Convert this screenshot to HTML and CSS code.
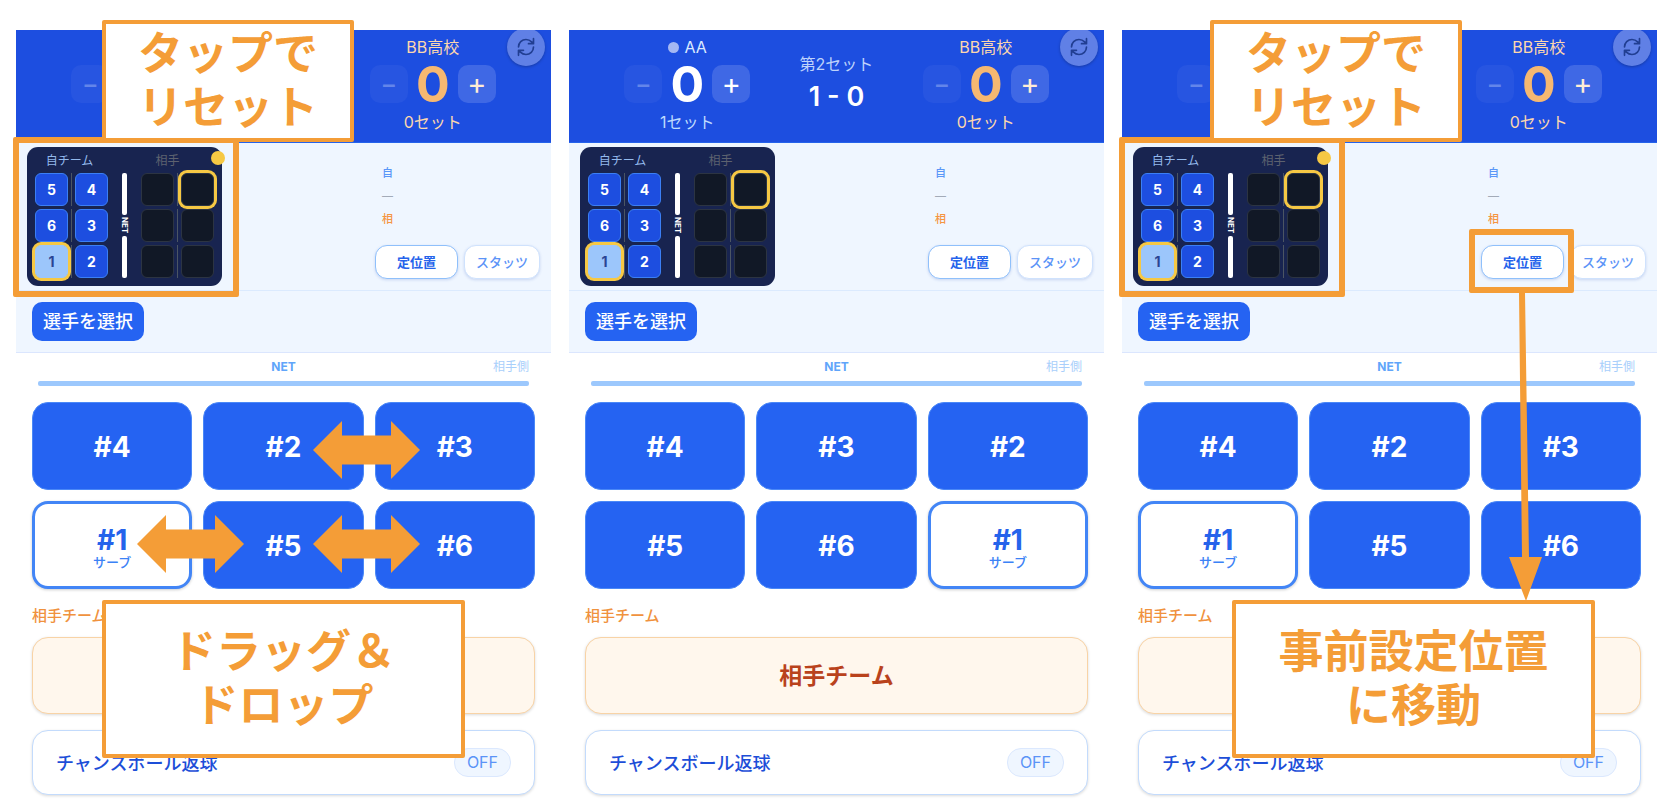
FILE: index.html
```html
<!DOCTYPE html>
<html lang="ja">
<head>
<meta charset="utf-8">
<title>ローテーション操作ガイド</title>
<link rel="stylesheet" href="styles.css">
</head>
<body>
<svg class="defs" aria-hidden="true">
  <symbol id="refresh" viewBox="0 0 24 24"><path d="M3 12a9 9 0 0 1 9-9 9.750 9.750 0 0 1 6.740 2.740L21 8M21 2v6h-6M21 12a9 9 0 0 1-9 9 9.750 9.750 0 0 1-6.740-2.740L3 16M9 16H3v6"/></symbol>
  <symbol id="swap" viewBox="0 0 107 58"><path d="M0 29 29 0V14.500H78V0L107 29 78 58V43.500H29V58Z"/></symbol>
</svg>
<main class="guide">

  <section class="phone">
    <header class="score">
      <div class="team">
        <div class="name"></div>
        <div class="counter"><button class="step" disabled>−</button></div>
      </div>
      <div class="match"></div>
      <div class="team away">
        <div class="name">BB高校</div>
        <div class="counter"><button class="step" disabled>−</button><strong>0</strong><button class="step">+</button></div>
        <div class="sets">0セット</div>
      </div>
      <button class="refresh" aria-label="更新"><svg><use href="#refresh"/></svg></button>
    </header>
    <div class="info">
      <div class="court">
        <div class="side">
          <span class="cap">自チーム</span>
          <div class="spots"><b>5</b><i></i><b>4</b><b>6</b><i></i><b>3</b><b class="serve">1</b><i></i><b>2</b></div>
        </div>
        <div class="mini-net"><span>NET</span></div>
        <div class="side opp">
          <span class="cap">相手</span>
          <div class="spots"><b></b><i></i><b class="ring"></b><b></b><i></i><b></b><b></b><i></i><b></b></div>
        </div>
      </div>
      <div class="tools">
        <div class="log"><span class="own">自</span><span class="dash">—</span><span class="rival">相</span></div>
        <div class="actions"><button class="home">定位置</button><button class="stats">スタッツ</button></div>
      </div>
    </div>
    <div class="pick"><button>選手を選択</button></div>
    <div class="net"><b>NET</b><span class="far">相手側</span></div>
    <div class="players">
      <button>#4</button><button>#2</button><button>#3</button>
      <button class="server">#1<small>サーブ</small></button><button>#5</button><button>#6</button>
    </div>
    <div class="rival-box">
      <h2>相手チーム</h2>
      <button aria-label="相手チーム"></button>
    </div>
    <button class="chance"><span>チャンスボール返球</span><em>OFF</em></button>

    <div class="frame frame-court"></div>
    <div class="note note-tap">タップで<br>リセット</div>
    <i class="pin"></i>
    <svg class="swap swap-a"><use href="#swap"/></svg>
    <svg class="swap swap-b"><use href="#swap"/></svg>
    <svg class="swap swap-c"><use href="#swap"/></svg>
    <div class="note note-drag">ドラッグ＆<br>ドロップ</div>
  </section>

  <section class="phone">
    <header class="score">
      <div class="team">
        <div class="name"><i class="dot"></i>AA</div>
        <div class="counter"><button class="step" disabled>−</button><strong>0</strong><button class="step">+</button></div>
        <div class="sets">1セット</div>
      </div>
      <div class="match"><span>第2セット</span><strong>1 - 0</strong></div>
      <div class="team away">
        <div class="name">BB高校</div>
        <div class="counter"><button class="step" disabled>−</button><strong>0</strong><button class="step">+</button></div>
        <div class="sets">0セット</div>
      </div>
      <button class="refresh" aria-label="更新"><svg><use href="#refresh"/></svg></button>
    </header>
    <div class="info">
      <div class="court">
        <div class="side">
          <span class="cap">自チーム</span>
          <div class="spots"><b>5</b><i></i><b>4</b><b>6</b><i></i><b>3</b><b class="serve">1</b><i></i><b>2</b></div>
        </div>
        <div class="mini-net"><span>NET</span></div>
        <div class="side opp">
          <span class="cap">相手</span>
          <div class="spots"><b></b><i></i><b class="ring"></b><b></b><i></i><b></b><b></b><i></i><b></b></div>
        </div>
      </div>
      <div class="tools">
        <div class="log"><span class="own">自</span><span class="dash">—</span><span class="rival">相</span></div>
        <div class="actions"><button class="home">定位置</button><button class="stats">スタッツ</button></div>
      </div>
    </div>
    <div class="pick"><button>選手を選択</button></div>
    <div class="net"><b>NET</b><span class="far">相手側</span></div>
    <div class="players">
      <button>#4</button><button>#3</button><button>#2</button>
      <button>#5</button><button>#6</button><button class="server">#1<small>サーブ</small></button>
    </div>
    <div class="rival-box">
      <h2>相手チーム</h2>
      <button>相手チーム</button>
    </div>
    <button class="chance"><span>チャンスボール返球</span><em>OFF</em></button>
  </section>

  <section class="phone">
    <header class="score">
      <div class="team">
        <div class="name"></div>
        <div class="counter"><button class="step" disabled>−</button></div>
      </div>
      <div class="match"></div>
      <div class="team away">
        <div class="name">BB高校</div>
        <div class="counter"><button class="step" disabled>−</button><strong>0</strong><button class="step">+</button></div>
        <div class="sets">0セット</div>
      </div>
      <button class="refresh" aria-label="更新"><svg><use href="#refresh"/></svg></button>
    </header>
    <div class="info">
      <div class="court">
        <div class="side">
          <span class="cap">自チーム</span>
          <div class="spots"><b>5</b><i></i><b>4</b><b>6</b><i></i><b>3</b><b class="serve">1</b><i></i><b>2</b></div>
        </div>
        <div class="mini-net"><span>NET</span></div>
        <div class="side opp">
          <span class="cap">相手</span>
          <div class="spots"><b></b><i></i><b class="ring"></b><b></b><i></i><b></b><b></b><i></i><b></b></div>
        </div>
      </div>
      <div class="tools">
        <div class="log"><span class="own">自</span><span class="dash">—</span><span class="rival">相</span></div>
        <div class="actions"><button class="home">定位置</button><button class="stats">スタッツ</button></div>
      </div>
    </div>
    <div class="pick"><button>選手を選択</button></div>
    <div class="net"><b>NET</b><span class="far">相手側</span></div>
    <div class="players">
      <button>#4</button><button>#2</button><button>#3</button>
      <button class="server">#1<small>サーブ</small></button><button>#5</button><button>#6</button>
    </div>
    <div class="rival-box">
      <h2>相手チーム</h2>
      <button aria-label="相手チーム"></button>
    </div>
    <button class="chance"><span>チャンスボール返球</span><em>OFF</em></button>

    <div class="frame frame-court"></div>
    <div class="note note-tap shifted">タップで<br>リセット</div>
    <i class="pin"></i>
    <div class="frame frame-home"></div>
    <svg class="pointer" viewBox="0 0 34 308"><path d="M10 0H16L20 264H33L17 308 0 264H13Z"/></svg>
    <div class="note note-move">事前設定位置<br>に移動</div>
  </section>

</main>
</body>
</html>
```

FILE: styles.css
```css
* { box-sizing: border-box; }
body {
  margin: 0;
  background: #fff;
  font-family: Inter, "Noto Sans CJK JP", sans-serif;
}
button { margin: 0; padding: 0; border: 0; font: inherit; color: inherit; cursor: pointer; }
i, em { font-style: normal; }
.defs { display: none; }

.guide {
  display: grid;
  grid-template-columns: repeat(3, minmax(0, 1fr));
  gap: 18px;
  padding: 30px 19px 16px 16px;
}
.phone { position: relative; display: flex; flex-direction: column; }

/* score header */
.score {
  position: relative;
  display: grid;
  grid-template-columns: 1fr 94px 1fr;
  height: 113px;
  padding: 5px 16px 0;
  border-bottom: 1px solid #2563eb;
  background: #1d4ee0;
  overflow: hidden;
  color: #fff;
}
.team { display: flex; flex-direction: column; align-items: center; }
.name { display: flex; align-items: center; gap: 6px; min-height: 24px; font-size: 16px; line-height: 24px; color: #dbeafe; }
.dot { width: 11px; height: 11px; border-radius: 50%; background: #a5b8f3; }
.counter { display: grid; grid-template-columns: 38px 50px 38px; align-items: center; margin-top: 6px; }
.counter strong { font-size: 50px; line-height: 38px; font-weight: 700; text-align: center; }
.step { height: 38px; border-radius: 10px; background: #3f68e5; font-size: 29px; line-height: 36px; font-weight: 400; color: #fff; }
.step:disabled { background: #2755e1; font-size: 25px; font-weight: 500; line-height: 38px; color: #6385ea; }
.sets { margin-top: 7px; font-size: 16px; line-height: 24px; color: #bfdbfe; }
.away .name, .away .sets { color: #fcd7ae; }
.away strong { color: #f6b871; }
.away .step:enabled { color: #ffedd5; }
.match { display: flex; flex-direction: column; align-items: center; padding-top: 17px; white-space: nowrap; }
.match span { font-size: 16px; line-height: 24px; color: #bfd3fb; }
.match strong { margin-top: 5px; font-size: 27px; line-height: 32px; font-weight: 600; }
.refresh {
  position: absolute;
  top: -2px;
  right: 6px;
  display: grid;
  place-items: center;
  width: 38px;
  height: 38px;
  border-radius: 50%;
  background: #6080e6;
  box-shadow: 0 1px 3px rgba(0, 0, 0, .25);
}
.refresh svg { width: 20px; height: 20px; overflow: visible; fill: none; stroke: #213e92; stroke-width: 2; stroke-linecap: round; stroke-linejoin: round; }

/* court and tools */
.info {
  display: flex;
  justify-content: space-between;
  height: 148px;
  padding: 4px 11px 0;
  border-bottom: 1px solid #dbeafe;
  background: #eff6ff;
}
.court { display: flex; justify-content: space-between; width: 195px; height: 139px; padding: 6px 8px 8px; border-radius: 11px; background: #182450; }
.side { display: flex; flex-direction: column; }
.cap { padding-right: 4px; font-size: 12px; line-height: 16px; margin-bottom: 4px; text-align: center; color: #93b9ec; }
.opp .cap { padding-right: 20px; color: #5d626f; }
.spots { display: grid; grid-template-columns: 33px 1px 33px; grid-auto-rows: 33px; gap: 3px; }
.spots i { background: #4b5563; }
.spots b {
  display: grid;
  place-items: center;
  border: 1px solid #3b7ff5;
  border-radius: 6px;
  background: #1d4ee0;
  font-size: 14px;
  font-weight: 700;
  color: #fff;
}
.spots .serve { border-color: #9cc6fb; background: #9cc6fb; color: #2a4494; box-shadow: 0 0 0 3px #f6c844; z-index: 1; }
.opp .spots b { border-color: #2c3442; background: #111826; }
.opp .spots .ring { box-shadow: 0 0 0 3px #f6c844; z-index: 1; }
.mini-net { display: flex; flex-direction: column; align-items: center; width: 6px; margin-top: 20px; }
.mini-net::before, .mini-net::after { content: ""; flex: 1; width: 5px; border-radius: 2px; background: #fff; }
.mini-net span { writing-mode: vertical-rl; padding: 2px 0; font-size: 8px; line-height: 8px; font-weight: 700; color: #fff; }

.tools { display: flex; flex-direction: column; justify-content: space-between; padding: 15px 0 11px; }
.log { display: flex; flex-direction: column; padding-left: 7px; font-size: 11px; line-height: 23px; font-weight: 500; }
.own { color: #5a97f8; }
.dash { color: #a3abb8; }
.rival { color: #f59542; }
.actions { display: flex; gap: 6px; }
.actions button {
  height: 34px;
  padding: 0 11px 2px;
  border: 1px solid #cfe2fd;
  border-radius: 12px;
  background: #fff;
  box-shadow: 0 1px 3px rgba(30, 64, 175, .18);
  font-size: 13px;
  font-weight: 500;
  color: #5b93f7;
}
.actions .home { padding: 0 21px 2px; border: 1px solid #8fc0fb; font-weight: 700; color: #2563eb; }

.pick { padding: 11px 16px; border-bottom: 1px solid #dbe6fe; background: #eff6ff; }
.pick button { display: block; height: 39px; padding: 0 11px; border-radius: 10px; background: #2563f2; font-size: 18px; line-height: 36px; font-weight: 500; color: #fff; }

/* rotation grid */
.net {
  display: grid;
  grid-template-columns: 1fr auto 1fr;
  row-gap: 4px;
  margin: 4px 22px 16px;
  font-size: 12px;
  line-height: 20px;
  color: #60a5fa;
}
.net::after { content: ""; grid-column: 1 / -1; height: 5px; border-radius: 2px; background: #9cc8fd; }
.net b { grid-column: 2; font-weight: 700; }
.far { text-align: right; color: #a9cffb; }
.players { display: grid; grid-template-columns: repeat(3, 1fr); grid-auto-rows: 88px; gap: 11px; padding: 0 16px; }
.players button {
  display: flex;
  flex-direction: column;
  align-items: center;
  justify-content: center;
  padding-top: 2px;
  border: 1px solid #4a88f7;
  border-radius: 16px;
  background: #2563f2;
  font-size: 28px;
  line-height: 32px;
  font-weight: 700;
  color: #fff;
}
.players .server { padding-top: 5px; border: 3px solid #4285f6; background: #fff; box-shadow: 0 1px 3px rgba(0, 0, 0, .2); color: #2563eb; line-height: 28px; }
.players small { font-size: 13px; line-height: 16px; font-weight: 500; color: #3b82f6; }

.rival-box { padding: 15px 16px 16px; }
.rival-box h2 { margin: 0 0 9px; font-size: 15px; line-height: 24px; font-weight: 500; color: #f0923e; }
.rival-box button {
  display: block;
  width: 100%;
  height: 77px;
  padding-bottom: 4px;
  border: 1px solid #f8d3a6;
  border-radius: 16px;
  background: #fff7ed;
  box-shadow: 0 1px 3px rgba(0, 0, 0, .15);
  font-size: 23px;
  font-weight: 700;
  color: #b9421c;
}
.chance {
  display: flex;
  align-items: center;
  justify-content: space-between;
  height: 65px;
  margin: 0 16px;
  padding: 0 23px;
  border: 1px solid #c3dbfc;
  border-radius: 16px;
  background: #fff;
  box-shadow: 0 1px 3px rgba(0, 0, 0, .15);
  font-size: 18px;
  font-weight: 500;
  color: #1d4ed8;
}
.chance span { padding-bottom: 2px; }
.chance em { padding: 0 12px; border: 1px solid #dbe8fe; border-radius: 14px; background: #eff6ff; font-size: 16px; line-height: 27px; font-weight: 400; color: #5b93f7; }

/* callouts laid over the screens */
.frame, .note, .pin, .swap, .pointer { position: absolute; z-index: 2; }
.frame { border: 6px solid #f49d37; border-radius: 2px; }
.frame-court { left: -3px; top: 107px; width: 226px; height: 160px; }
.frame-home { left: 347px; top: 199px; width: 105px; height: 64px; }
.note {
  display: grid;
  place-items: center;
  border: 4px solid #f49d37;
  border-radius: 2px;
  background: #fff;
  font-size: 45px;
  line-height: 54px;
  font-weight: 700;
  text-align: center;
  color: #f49d37;
}
.note-tap { left: 86px; top: -10px; width: 252px; height: 122px; }
.shifted { left: 88px; }
.note-drag { left: 86px; top: 570px; width: 363px; height: 158px; }
.note-move { left: 110px; top: 570px; width: 363px; height: 158px; }
.pin { left: 195px; top: 121px; width: 14px; height: 14px; border-radius: 50%; background: #f6c844; }
.swap { width: 107px; height: 58px; fill: #f49d37; }
.swap-a { left: 297px; top: 391px; }
.swap-b { left: 121px; top: 485px; }
.swap-c { left: 297px; top: 485px; }
.pointer { left: 387px; top: 263px; width: 34px; height: 308px; fill: #f49d37; }
```
